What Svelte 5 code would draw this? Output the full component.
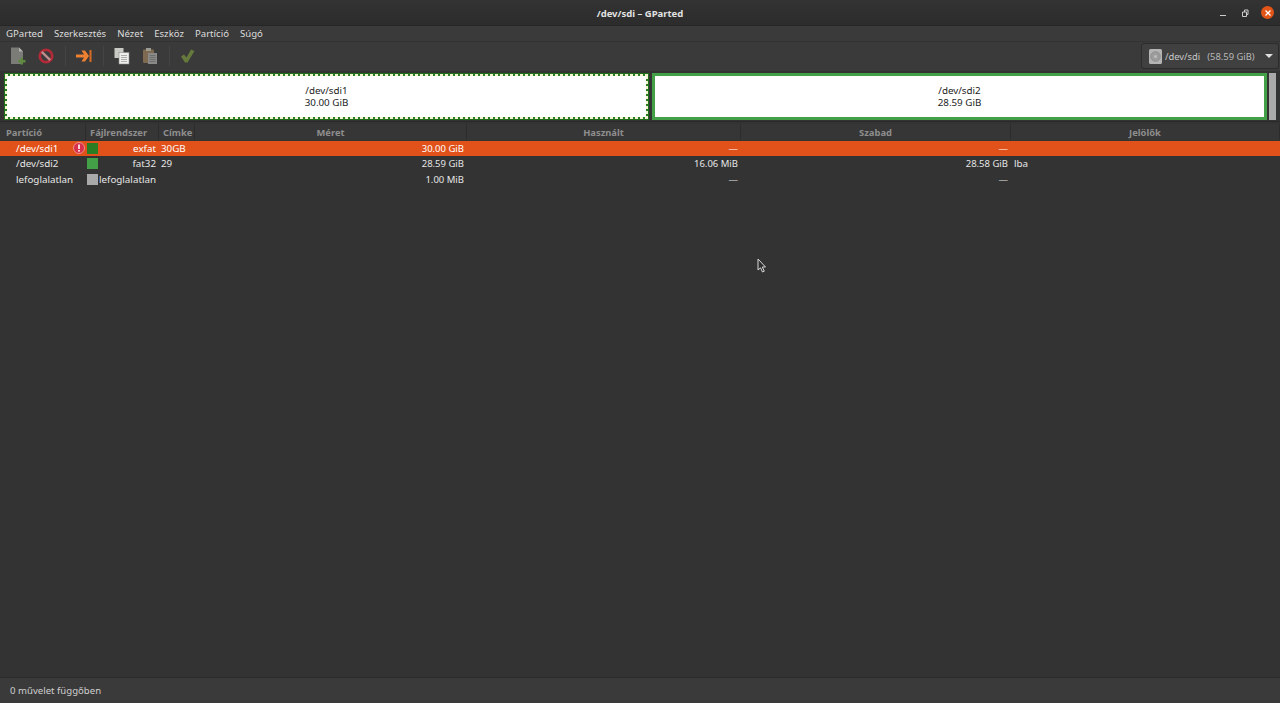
<script>
	const menus = ['GParted', 'Szerkesztés', 'Nézet', 'Eszköz', 'Partíció', 'Súgó'];
	const rows = [
		{ name: '/dev/sdi1', warn: true, color: '#2a7d22', fs: 'exfat', label: '30GB', size: '30.00 GiB', used: '—', free: '—', flags: '', selected: true },
		{ name: '/dev/sdi2', warn: false, color: '#43a047', fs: 'fat32', label: '29', size: '28.59 GiB', used: '16.06 MiB', free: '28.58 GiB', flags: 'lba', selected: false },
		{ name: 'lefoglalatlan', warn: false, color: '#a9a9a9', fs: 'lefoglalatlan', label: '', size: '1.00 MiB', used: '—', free: '—', flags: '', selected: false }
	];
</script>

<div class="window">
	<header class="titlebar">
		<span class="title">/dev/sdi – GParted</span>
		<div class="winbtns">
			<svg width="12" height="12" viewBox="0 0 12 12"><path d="M3 8.500h6" stroke="#ccc" stroke-width="1" /></svg>
			<svg width="12" height="12" viewBox="0 0 12 12"><path d="M3.500 5h4v4.500h-4zM5.500 5V3h3.500v4.500H7.500" fill="none" stroke="#ccc" stroke-width="1" /></svg>
			<span class="close">
				<svg width="12" height="12" viewBox="0 0 12 12"><path d="M3.500 3.500l5 5M8.500 3.500l-5 5" stroke="#fff" stroke-width="1.300" /></svg>
			</span>
		</div>
	</header>

	<nav class="menubar">
		{#each menus as m}
			<span>{m}</span>
		{/each}
	</nav>

	<div class="toolbar">
		<div class="tools">
			<svg class="tool" width="18" height="18" viewBox="0 0 18 18">
				<path d="M2 0.500h8l4 4v12.500H2z" fill="#7b7b78" />
				<path d="M10 0.500l4 4h-4z" fill="#b4b4b0" />
				<path d="M11.500 10.500h2.500v2.500h2.500v2.500H14v2h-2.500v-2H9V13h2.500z" fill="#5f8a40" />
			</svg>
			<svg class="tool" width="18" height="18" viewBox="0 0 18 18">
				<circle cx="9" cy="9" r="6.200" fill="none" stroke="#b02a38" stroke-width="2.800" />
				<path d="M4.800 4.800l8.400 8.400" stroke="#c08c8c" stroke-width="2.400" />
			</svg>
			<i class="sep"></i>
			<svg class="tool" width="18" height="18" viewBox="0 0 18 18">
				<path d="M1 7.500h8L6.500 3.500h3.500l4 5.500-4 5.500H6.500L9 10.500H1z" fill="#ee8030" />
				<rect x="14.500" y="3" width="2" height="12" fill="#d96a24" />
			</svg>
			<i class="sep"></i>
			<svg class="tool" width="18" height="18" viewBox="0 0 18 18">
				<rect x="1.500" y="1" width="9" height="10" fill="#c9c9c6" />
				<rect x="6" y="5.500" width="10" height="11.500" fill="#eeeeec" stroke="#8c8c8c" stroke-width="0.600" />
				<path d="M8 8.500h6M8 10.500h6M8 12.500h6M8 14.500h6" stroke="#9b9b9b" stroke-width="0.800" />
			</svg>
			<svg class="tool" width="18" height="18" viewBox="0 0 18 18">
				<rect x="2" y="2.500" width="11" height="13.500" rx="1" fill="#7d6a50" />
				<rect x="5" y="1" width="5" height="3" fill="#9b9b92" />
				<rect x="7" y="6" width="9" height="11" fill="#8a8a88" />
				<path d="M8.500 8.500h6M8.500 10.500h6M8.500 12.500h6M8.500 14.500h6" stroke="#6a6a68" stroke-width="0.800" />
			</svg>
			<i class="sep"></i>
			<svg class="tool" width="18" height="18" viewBox="0 0 18 18">
				<path d="M2 9.500l3-2 2.500 3L12 2.500l3.500 1.500L8.500 15.500H6z" fill="#66793c" />
			</svg>
		</div>
		<div class="device">
			<svg width="13" height="15" viewBox="0 0 13 15">
				<rect width="13" height="15" rx="1.500" fill="#b4b4b4" />
				<circle cx="6.500" cy="7.500" r="4.800" fill="#9c9c9c" stroke="#858585" stroke-width="0.700" />
				<circle cx="6.500" cy="7.500" r="1.500" fill="#bdbdbd" />
			</svg>
			<span>/dev/sdi</span>
			<span class="devsize">(58.59 GiB)</span>
			<i class="arrow"></i>
		</div>
	</div>

	<div class="diskmap">
		<div class="part part1">
			<span>/dev/sdi1</span>
			<span>30.00 GiB</span>
		</div>
		<div class="part part2">
			<span>/dev/sdi2</span>
			<span>28.59 GiB</span>
		</div>
		<div class="unalloc"></div>
	</div>

	<main class="list">
		<div class="row head">
			<span class="h first">Partíció</span>
			<span class="h tight">Fájlrendszer</span>
			<span class="h tight">Címke</span>
			<span class="h mid">Méret</span>
			<span class="h mid">Használt</span>
			<span class="h mid">Szabad</span>
			<span class="h mid">Jelölők</span>
		</div>
		{#each rows as r}
			<div class="row item" class:selected={r.selected}>
				<span class="cname">
					<span>{r.name}</span>
					{#if r.warn}
						<svg class="warn" width="12" height="12" viewBox="0 0 12 12">
							<circle cx="6" cy="6" r="5.500" fill="#d8304a" stroke="#f3b0b0" stroke-width="0.700" />
							<rect x="5.200" y="2.500" width="1.600" height="4.500" fill="#fff" />
							<rect x="5.200" y="8" width="1.600" height="1.600" fill="#fff" />
						</svg>
					{/if}
				</span>
				<span class="cfs">
					<i class="swatch" style="background: {r.color}"></i>
					<span>{r.fs}</span>
				</span>
				<span class="clabel">{r.label}</span>
				<span class="num">{r.size}</span>
				<span class="num">{r.used}</span>
				<span class="num">{r.free}</span>
				<span class="flags">{r.flags}</span>
			</div>
		{/each}

		<svg class="cursor" width="10" height="15" viewBox="0 0 10 15">
			<path d="M1 1v11l2.500-2.200L5.500 14l1.800-.8-2-4.200H8.500z" fill="#2e2e2e" stroke="#d8d8d8" stroke-width="1" />
		</svg>
	</main>

	<footer class="statusbar">0 művelet függőben</footer>
</div>

<style>
	:global(body) {
		margin: 0;
		background: #333333;
	}
	.window {
		height: 703px;
		display: flex;
		flex-direction: column;
		overflow: hidden;
		background: #333333;
		color: #e6e6e6;
		font-family: "Noto Sans", "Open Sans", sans-serif;
		font-size: 9.8px;
	}

	.titlebar {
		height: 25px;
		flex: none;
		position: relative;
		display: flex;
		align-items: center;
		justify-content: center;
		padding-top: 2px;
		box-sizing: border-box;
		background: linear-gradient(#333333, #2c2c2c);
	}
	.title {
		font-weight: 700;
		font-size: 9.5px;
		color: #e2e2e2;
	}
	.winbtns {
		position: absolute;
		right: 6px;
		top: 6px;
		display: flex;
		align-items: center;
		gap: 10px;
	}
	.close {
		width: 13px;
		height: 13px;
		border-radius: 50%;
		background: #e25418;
		display: flex;
		align-items: center;
		justify-content: center;
	}

	.menubar {
		height: 16px;
		flex: none;
		display: flex;
		align-items: center;
		gap: 11px;
		padding-left: 6px;
		background: #3a3a3a;
		color: #dddddd;
		border-top: 1px solid #262626;
		box-sizing: border-box;
		font-size: 9.6px;
	}

	.toolbar {
		height: 30px;
		flex: none;
		display: flex;
		align-items: center;
		justify-content: space-between;
		background: #3a3a3a;
		border-top: 1px solid #333333;
		box-sizing: border-box;
	}
	.tools {
		display: flex;
		align-items: center;
		padding: 0 0 2px 9px;
		gap: 10px;
	}
	.tool {
		display: block;
	}
	.sep {
		width: 1px;
		height: 20px;
		margin: 0 -0.500px;
		background: #444444;
	}
	.device {
		width: 138px;
		height: 26px;
		box-sizing: border-box;
		margin: 0 1px 1px 0;
		padding-left: 7px;
		display: flex;
		align-items: center;
		gap: 3px;
		background: #404040;
		border: 1px solid #2c2c2c;
		border-radius: 3px;
		color: #c8c8c8;
		font-size: 9.4px;
		position: relative;
	}
	.devsize {
		margin-left: 4px;
		color: #b8b8b8;
	}
	.arrow {
		position: absolute;
		right: 5px;
		top: 10px;
		width: 0;
		height: 0;
		border-left: 4px solid transparent;
		border-right: 4px solid transparent;
		border-top: 4px solid #e0e0e0;
	}

	.diskmap {
		height: 51px;
		flex: none;
		display: flex;
		gap: 3px;
		padding: 2px 4px 1px 4px;
		box-sizing: border-box;
		background: #333333;
		border-bottom: 1px solid #2a2a2a;
	}
	.part {
		background: #ffffff;
		color: #1c1c1c;
		box-sizing: border-box;
		display: flex;
		flex-direction: column;
		align-items: center;
		justify-content: center;
		line-height: 12px;
	}
	.part1 {
		width: 645px;
		border: 1px solid #1f6e1a;
		background:
			repeating-linear-gradient(90deg, #f4f4d4 0 3px, #2a7d22 3px 5px) top / 100% 2px no-repeat,
			repeating-linear-gradient(90deg, #f4f4d4 0 3px, #2a7d22 3px 5px) bottom / 100% 2px no-repeat,
			repeating-linear-gradient(0deg, #f4f4d4 0 3px, #2a7d22 3px 5px) left / 2px 100% no-repeat,
			repeating-linear-gradient(0deg, #f4f4d4 0 3px, #2a7d22 3px 5px) right / 2px 100% no-repeat,
			#ffffff;
	}
	.part2 {
		width: 615px;
		border: 3px solid #43a047;
	}
	.unalloc {
		width: 7px;
		margin-left: -1px;
		background: #a9a9a9;
	}

	.list {
		flex: 1;
		position: relative;
		padding-top: 2px;
	}
	.row {
		display: grid;
		grid-template-columns: 86px 73px 36px 272px 274px 270px 1fr;
		align-items: center;
	}
	.head {
		height: 16px;
		margin-bottom: 1px;
		background: #363636;
		color: #8e8e8e;
		font-weight: 700;
		font-size: 9.4px;
	}
	.h {
		height: 100%;
		display: flex;
		align-items: center;
		box-sizing: border-box;
		border-right: 1px solid #2c2c2c;
		white-space: nowrap;
	}
	.h.first {
		padding-left: 6px;
	}
	.h.tight {
		padding-left: 4px;
	}
	.h.mid {
		justify-content: center;
	}
	.item {
		height: 15px;
	}
	.item:nth-of-type(4) {
		margin-top: 1px;
	}
	.item.selected {
		background: #e0521a;
		color: #ffffff;
	}
	.cname {
		padding-left: 16px;
		position: relative;
		white-space: nowrap;
	}
	.warn {
		position: absolute;
		left: 73px;
		top: 0;
	}
	.cfs {
		display: flex;
		align-items: center;
		justify-content: space-between;
		padding: 0 3px 0 1px;
		white-space: nowrap;
	}
	.swatch {
		width: 11px;
		height: 11px;
		flex: none;
	}
	.clabel {
		padding-left: 2px;
	}
	.num {
		text-align: right;
		padding-right: 3px;
		font-size: 9.5px;
	}
	.flags {
		padding-left: 3px;
	}
	.cursor {
		position: absolute;
		left: 757px;
		top: 136px;
	}

	.statusbar {
		height: 26px;
		flex: none;
		display: flex;
		align-items: center;
		padding-left: 10px;
		background: #3a3a3a;
		border-top: 1px solid #2a2a2a;
		box-sizing: border-box;
		color: #cfcfcf;
		font-size: 9.6px;
	}
</style>
